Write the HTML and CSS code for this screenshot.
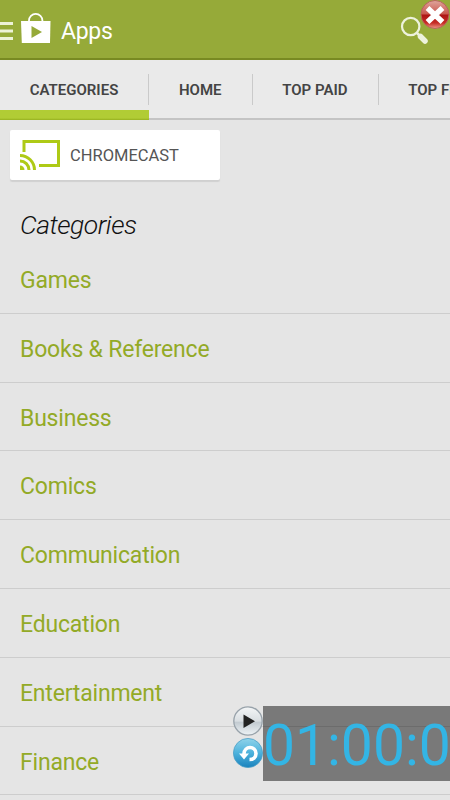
FILE: index.html
```
<!DOCTYPE html>
<html lang="en">

<head>
  <meta charset="UTF-8">
  <meta name="viewport" content="width=device-width, initial-scale=1.0">
  <title>Apps</title>
  <link rel="stylesheet" href="styles.css">
</head>

<body>
  <header class="topbar">
    <svg class="menu" width="13" height="20" viewBox="0 0 13 20">
      <path d="M0 2.500h13M0 10h13M0 17.500h13" stroke="#edf2d8" stroke-width="3"/>
    </svg>
    <svg class="bag" width="30" height="32" viewBox="0 0 30 32">
      <path d="M8 10V8.500a6.700 6.700 0 0 1 13.400 0V10" fill="none" stroke="#fff" stroke-width="1.800"/>
      <path d="M0 9h29.500l-.5 22H.8z" fill="#fff"/>
      <path d="M10.500 14l10.500 6-10.500 6z" fill="#96aa39"/>
    </svg>
    <h1>Apps</h1>
    <svg class="search" width="30" height="30" viewBox="0 0 30 30">
      <circle cx="10.700" cy="10.500" r="8.700" fill="none" stroke="#edf2dc" stroke-width="2.200"/>
      <path d="M17 17l3 3" stroke="#edf2dc" stroke-width="2.500"/>
      <path d="M20.500 20.500l4.500 4.500" stroke="#edf2dc" stroke-width="5.500" stroke-linecap="round"/>
    </svg>
  </header>

  <nav class="tabs">
    <a class="tab active"><span>CATEGORIES</span></a>
    <a class="tab"><span>HOME</span></a>
    <a class="tab"><span>TOP PAID</span></a>
    <a class="tab"><span>TOP FREE</span></a>
  </nav>

  <main>
    <div class="card">
      <svg width="40" height="30" viewBox="0 0 40 30" fill="none" stroke="#aeca16">
        <path d="M4 12V1.500h34.500v24H19" stroke-width="3"/>
        <path d="M0 15.500a14.500 14.500 0 0 1 14.500 14.500M0 21a9 9 0 0 1 9 9" stroke-width="3"/>
        <path d="M0 25.500a4.500 4.500 0 0 1 4.500 4.500H0z" fill="#aeca16" stroke="none"/>
      </svg>
      <span>CHROMECAST</span>
    </div>

    <h2>Categories</h2>
    <ul class="list">
      <li>Games</li>
      <li>Books &amp; Reference</li>
      <li>Business</li>
      <li>Comics</li>
      <li>Communication</li>
      <li>Education</li>
      <li>Entertainment</li>
      <li>Finance</li>
    </ul>
  </main>

  <!-- floating timer -->
  <svg class="close" width="30" height="30" viewBox="0 0 30 30">
    <defs>
      <linearGradient id="red" x1="0" y1="0" x2="0" y2="1">
        <stop offset="0" stop-color="#dfa59c"/>
        <stop offset=".48" stop-color="#c9574d"/>
        <stop offset=".52" stop-color="#ae1514"/>
        <stop offset=".8" stop-color="#c62c25"/>
        <stop offset="1" stop-color="#ef9a88"/>
      </linearGradient>
    </defs>
    <circle cx="15" cy="14.500" r="14" fill="url(#red)" stroke="#b5655a"/>
    <path d="M7.500 8l15 14M22.500 8l-15 14" stroke="#fff" stroke-width="5.500"/>
  </svg>

  <div class="timer">
    <div class="controls">
      <svg width="30" height="30" viewBox="0 0 30 30">
        <defs>
          <linearGradient id="silver" x1="0" y1="0" x2="0" y2="1">
            <stop offset="0" stop-color="#f4f6f7"/>
            <stop offset=".5" stop-color="#d9dee2"/>
            <stop offset=".55" stop-color="#c3cbd1"/>
            <stop offset="1" stop-color="#eef3f6"/>
          </linearGradient>
        </defs>
        <circle cx="15" cy="15" r="14.200" fill="url(#silver)" stroke="#98a2aa" stroke-width="1.300"/>
        <path d="M10.500 8.500L22 15.200l-11.500 6.800z" fill="#222"/>
      </svg>
      <svg width="30" height="30" viewBox="0 0 30 30">
        <defs>
          <linearGradient id="blue" x1="0" y1="0" x2="0" y2="1">
            <stop offset="0" stop-color="#8fd3ea"/>
            <stop offset=".5" stop-color="#4db2dc"/>
            <stop offset="1" stop-color="#1a82bd"/>
          </linearGradient>
        </defs>
        <circle cx="15" cy="15" r="14.600" fill="url(#blue)" stroke="#4c9fc6" stroke-width=".8"/>
        <path d="M11 16c0-8.500 12-8.500 12-.5 0 4-3 6-6.500 6" fill="none" stroke="#fff" stroke-width="3.600"/>
        <path d="M6 15.500h10l-5 6z" fill="#fff"/>
      </svg>
    </div>
    <div class="time">01:00:00</div>
  </div>
</body>

</html>
```

FILE: styles.css
```
* {
  box-sizing: border-box;
}

body {
  margin: 0;
  height: 800px;
  overflow: hidden;
  position: relative;
  background-color: #e5e5e5;
  font-family: Roboto, sans-serif;
}

.topbar {
  display: flex;
  align-items: flex-start;
  height: 60px;
  background-color: #96aa39;
  border-bottom: 2px solid #788a22;
}

.menu {
  margin-top: 21px;
}

.bag {
  margin: 12px 0 0 8px;
}

.topbar h1 {
  margin: 18px 0 0 10px;
  font-size: 23px;
  line-height: 28px;
  font-weight: 400;
  letter-spacing: -0.3px;
  color: #fff;
}

.search {
  margin: 16px 20px 0 auto;
}

.tabs {
  display: flex;
  height: 60px;
  background-color: #eaeaea;
  border-bottom: 2px solid #c4c4c4;
}

.tab {
  flex: none;
  height: 60px;
  padding-top: 14px;
  font-size: 15px;
  font-weight: 600;
  line-height: 33px;
  color: #444;
}

.tab span {
  display: block;
  height: 31px;
  padding: 0 30px 0 29.700px;
  border-right: 1px solid #cacaca;
}

.active {
  background: linear-gradient(#b1cc35 80%, #96b020) bottom / 100% 10px no-repeat;
}

.card {
  display: flex;
  align-items: center;
  width: 210px;
  height: 50px;
  margin: 10px 0 0 10px;
  padding-left: 10px;
  background-color: #fff;
  border-radius: 2px;
  box-shadow: 0 2px 1px #d0d0d0;
  font-size: 16.5px;
  color: #555;
}

.card span {
  margin: 1px 0 0 10px;
}

h2 {
  margin: 29px 0 0 20px;
  font-size: 26.5px;
  line-height: 32px;
  font-weight: 300;
  font-style: italic;
  letter-spacing: -0.5px;
  color: #111;
}

.list {
  margin: 4px 0 0;
  padding: 0;
  list-style: none;
}

.list li {
  height: 68.8px;
  padding-left: 20px;
  border-bottom: 1px solid #cdcdcd;
  font-size: 23px;
  line-height: 72px;
  letter-spacing: -0.2px;
  color: #93aa27;
}

.close {
  position: absolute;
  top: 0;
  left: 420px;
}

.timer {
  position: absolute;
  left: 233px;
  top: 706px;
  display: flex;
  width: 217px;
  overflow: hidden;
}

.controls {
  display: flex;
  flex-direction: column;
  gap: 2px;
  width: 30px;
}

.time {
  flex: none;
  width: 230px;
  height: 75px;
  background-color: rgba(0, 0, 0, 0.47);
  color: #33b5e5;
  font-size: 57px;
  line-height: 80px;
}
```
